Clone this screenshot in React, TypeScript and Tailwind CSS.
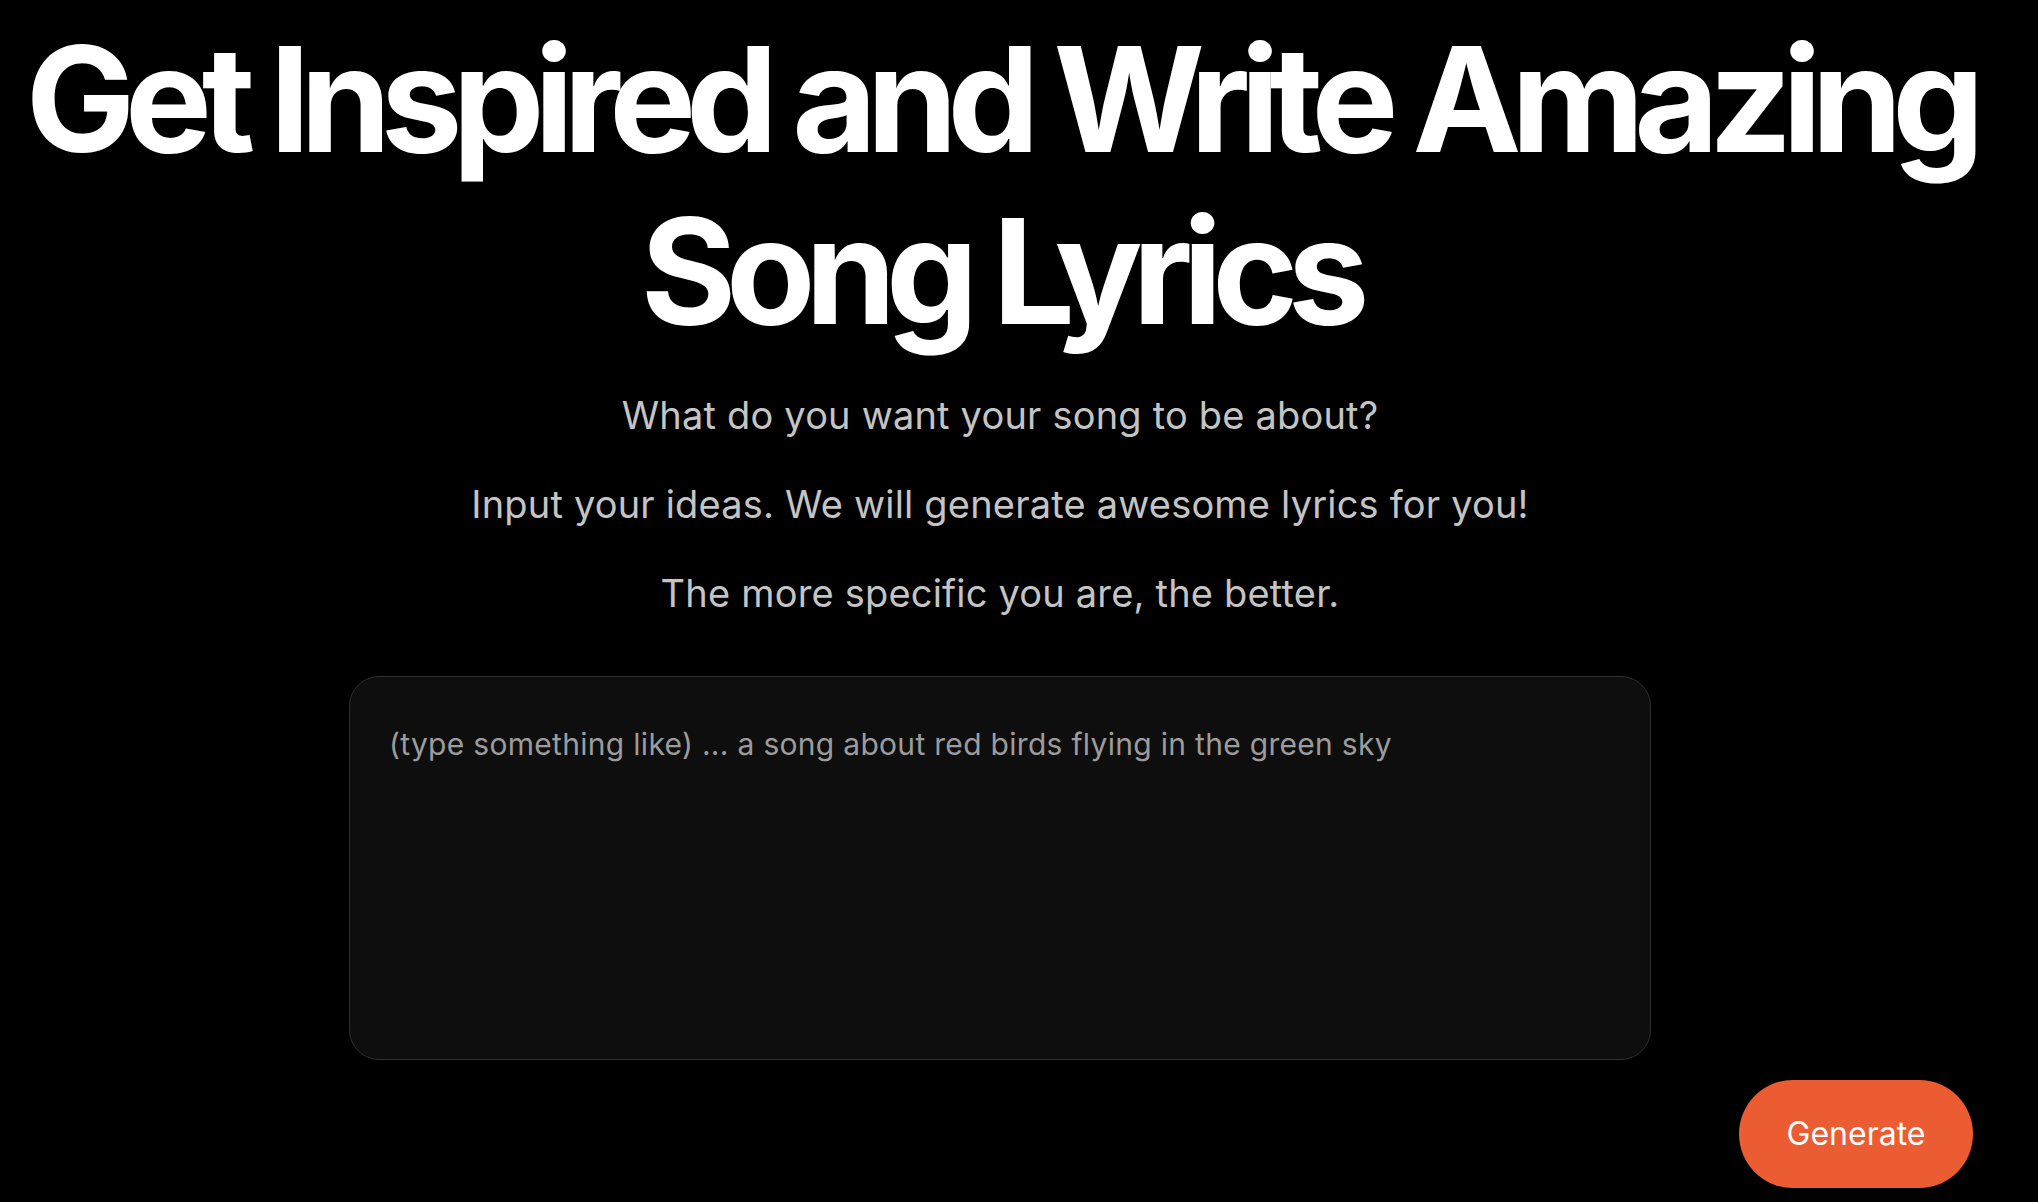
import { useState } from "react";

export default function App() {
  const [idea, setIdea] = useState("");

  const prompts: string[] = [
    "What do you want your song to be about?",
    "Input your ideas. We will generate awesome lyrics for you!",
    "The more specific you are, the better.",
  ];

  return (
    <div className="min-h-screen w-full bg-black text-white font-['Inter',sans-serif] overflow-hidden">
      <div className="w-[1946px] ml-[27px] pt-[13px] flex flex-col items-center">
        <h1 className="text-[146px] leading-[172px] font-bold tracking-[-0.07em] text-center whitespace-nowrap">
          Get Inspired and Write Amazing
          <br />
          Song Lyrics
        </h1>

        <div className="mt-[36px] flex flex-col items-center gap-[45px]">
          {prompts.map((line, index: number) => (
            <p key={index} className="text-[38px] leading-[44px] text-[#c4c4c4] tracking-[0.005em] text-center">
              {line}
            </p>
          ))}
        </div>

        <textarea
          value={idea}
          onChange={(e) => setIdea(e.target.value)}
          placeholder="(type something like) ... a song about red birds flying in the green sky"
          className="mt-[61px] w-[1302px] h-[384px] rounded-[30px] border border-[#2e2e2e] bg-[#0e0e0e] pl-[39px] pr-[44px] pt-[46px] text-[30px] leading-[42px] tracking-[0.01em] text-[#d0d0d0] placeholder:text-[#9c9c9c] resize-none outline-none"
        />

        <div className="w-full flex justify-end mt-[20px]">
          <button className="w-[234px] h-[108px] rounded-full bg-[#ec5c32] text-white text-[32px] font-normal">
            Generate
          </button>
        </div>
      </div>
    </div>
  );
}
